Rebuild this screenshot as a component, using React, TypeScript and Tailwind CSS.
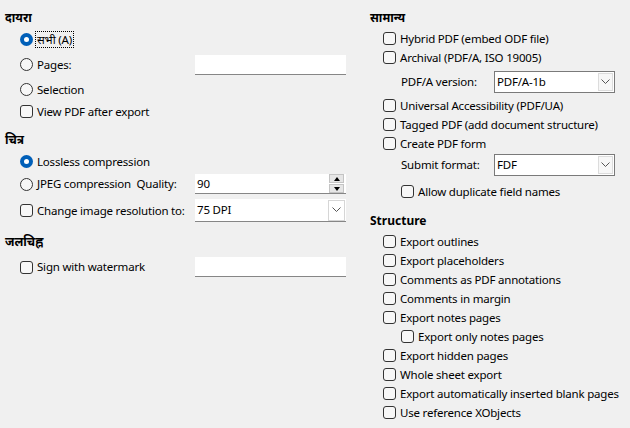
import React from 'react';

const font = { fontFamily: '"Noto Sans", "Open Sans", sans-serif' };

const Check = () => (
  <span className="inline-block w-[13px] h-[13px] shrink-0 rounded-[3px] border border-[#333333] bg-[#f7f7f7]" />
);

const Radio = ({ on }: { on?: boolean }) =>
  on ? (
    <span className="inline-flex w-[13px] h-[13px] shrink-0 items-center justify-center rounded-full bg-[#005fb8]">
      <span className="w-[5px] h-[5px] rounded-full bg-white" />
    </span>
  ) : (
    <span className="inline-block w-[13px] h-[13px] shrink-0 rounded-full border border-[#333333] bg-[#f7f7f7]" />
  );

const Chevron = () => (
  <svg width="9" height="6" viewBox="0 0 9 6" className="text-[#555]">
    <path d="M0.5 0.5 L4.5 4.5 L8.5 0.5" fill="none" stroke="currentColor" strokeWidth="1" />
  </svg>
);

const TextBox = ({ value }: { value?: string }) => (
  <div className="w-[151px] h-[20px] shrink-0 bg-white border-b border-[#868686] flex items-center pl-[2px]">
    {value}
  </div>
);

const Spin = ({ value }: { value: string }) => (
  <div className="w-[151px] h-[20px] shrink-0 bg-white border-b border-[#868686] flex items-center pl-[2px]">
    <span className="flex-1">{value}</span>
    <div className="flex flex-col w-[15px] mr-[2px] gap-[1px]">
      <div className="h-[9px] bg-[#e6e6e6] border border-[#c4c4c4] flex items-center justify-center">
        <svg width="6" height="4" viewBox="0 0 6 4"><path d="M3 0 L6 4 L0 4 Z" fill="#000" /></svg>
      </div>
      <div className="h-[9px] bg-[#e6e6e6] border border-[#c4c4c4] flex items-center justify-center">
        <svg width="6" height="4" viewBox="0 0 6 4"><path d="M0 0 L6 0 L3 4 Z" fill="#000" /></svg>
      </div>
    </div>
  </div>
);

const FlatSelect = ({ value }: { value: string }) => (
  <div className="w-[151px] h-[23px] shrink-0 bg-white border-b border-[#868686] flex items-center pl-[2px]">
    <span className="flex-1">{value}</span>
    <div className="w-[17px] h-[21px] mr-[1px] border border-[#d6d6d6] bg-white flex items-center justify-center">
      <Chevron />
    </div>
  </div>
);

const BoxSelect = ({ value }: { value: string }) => (
  <div className="w-[121px] h-[22px] shrink-0 bg-white border border-[#7a7a7a] flex items-center pl-[2px]">
    <span className="flex-1">{value}</span>
    <div className="w-[15px] h-[18px] mr-[1px] border border-[#dcdcdc] bg-[#f7f7f7] flex items-center justify-center">
      <Chevron />
    </div>
  </div>
);

const Row = ({ children, className = '' }: { children: React.ReactNode; className?: string }) => (
  <div className={`flex items-center gap-[4px] whitespace-nowrap ${className}`}>{children}</div>
);

const Heading = ({ children, className = '' }: { children: React.ReactNode; className?: string }) => (
  <div className={`h-[19px] flex items-center font-bold text-[12px] tracking-normal ${className}`}>{children}</div>
);

const structure = [
  'Export outlines',
  'Export placeholders',
  'Comments as PDF annotations',
  'Comments in margin',
  'Export notes pages',
  'Export only notes pages',
  'Export hidden pages',
  'Whole sheet export',
  'Export automatically inserted blank pages',
  'Use reference XObjects',
];

export default function App() {
  return (
    <div
      className="w-[630px] h-[428px] bg-[#f0f0f0] text-[11.5px] tracking-[-0.2px] text-black flex overflow-hidden"
      style={font}
    >
      {/* left column */}
      <div className="w-[370px] flex flex-col pt-[8px] pl-[5px]">
        <Heading>दायरा</Heading>
        <Row className="h-[25px] pl-[15px]">
          <Radio on />
          <span className="border border-dotted border-black px-[1px] leading-[15px] -ml-[2px]">सभी (A)</span>
        </Row>
        <Row className="h-[25px] pl-[15px]">
          <Radio />
          <span className="w-[154px]">Pages:</span>
          <TextBox />
        </Row>
        <Row className="h-[25px] pl-[15px]">
          <Radio />
          <span>Selection</span>
        </Row>
        <Row className="h-[19px] pl-[15px]">
          <Check />
          <span>View PDF after export</span>
        </Row>

        <Heading className="mt-[9px]">चित्र</Heading>
        <Row className="h-[19px] mt-[3px] pl-[15px]">
          <Radio on />
          <span>Lossless compression</span>
        </Row>
        <Row className="h-[20px] mt-[3px] pl-[15px]">
          <Radio />
          <span className="w-[154px]">JPEG compression&nbsp; Quality:</span>
          <Spin value="90" />
        </Row>
        <Row className="h-[23px] mt-[5px] pl-[15px]">
          <Check />
          <span className="w-[154px]">Change image resolution to:</span>
          <FlatSelect value="75 DPI" />
        </Row>

        <Heading className="mt-[10px]">जलचिह्न</Heading>
        <Row className="h-[20px] mt-[6px] pl-[15px]">
          <Check />
          <span className="w-[154px]">Sign with watermark</span>
          <TextBox />
        </Row>
      </div>

      {/* right column */}
      <div className="flex-1 flex flex-col pt-[8px]">
        <Heading>सामान्य</Heading>
        <Row className="h-[19px] mt-[2px] pl-[13px]">
          <Check />
          <span>Hybrid PDF (embed ODF file)</span>
        </Row>
        <Row className="h-[19px] pl-[13px]">
          <Check />
          <span>Archival (PDF/A, ISO 19005)</span>
        </Row>
        <div className="h-[22px] mt-[4px] pl-[31px] flex items-center whitespace-nowrap">
          <span className="w-[93px]">PDF/A version:</span>
          <BoxSelect value="PDF/A-1b" />
        </div>
        <Row className="h-[19px] mt-[3px] pl-[13px]">
          <Check />
          <span>Universal Accessibility (PDF/UA)</span>
        </Row>
        <Row className="h-[19px] pl-[13px]">
          <Check />
          <span>Tagged PDF (add document structure)</span>
        </Row>
        <Row className="h-[19px] pl-[13px]">
          <Check />
          <span>Create PDF form</span>
        </Row>
        <div className="h-[22px] mt-[1px] pl-[31px] flex items-center whitespace-nowrap">
          <span className="w-[93px]">Submit format:</span>
          <BoxSelect value="FDF" />
        </div>
        <Row className="h-[19px] mt-[6px] pl-[31px]">
          <Check />
          <span>Allow duplicate field names</span>
        </Row>

        <Heading className="mt-[10px]">Structure</Heading>
        <div className="flex flex-col mt-[2px]">
          {structure.map((s) => (
            <Row key={s} className={`h-[19px] ${s === 'Export only notes pages' ? 'pl-[31px]' : 'pl-[13px]'}`}>
              <Check />
              <span>{s}</span>
            </Row>
          ))}
        </div>
      </div>
    </div>
  );
}
